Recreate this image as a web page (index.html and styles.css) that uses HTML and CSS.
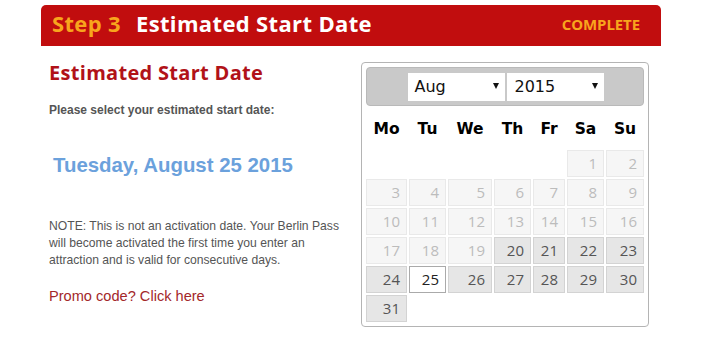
FILE: index.html
```html
<!DOCTYPE html>
<html>
<head>
<meta charset="utf-8">
<link rel="stylesheet" href="styles.css">
</head>
<body>
<div class="page">
  <div class="step-bar">
    <div class="step-title"><span class="step-num">Step 3</span><span class="step-name">Estimated Start Date</span></div>
    <div class="step-status">COMPLETE</div>
  </div>
  <div class="content">
    <div class="info">
      <h2 class="info-title">Estimated Start Date</h2>
      <p class="prompt">Please select your estimated start date:</p>
      <p class="chosen">Tuesday, August 25 2015</p>
      <p class="note">NOTE: This is not an activation date. Your Berlin Pass will become activated the first time you enter an attraction and is valid for consecutive days.</p>
      <a class="promo" href="#">Promo code? Click here</a>
    </div>
    <div class="calendar">
      <div class="cal-head">
        <div class="sel sel-month"><span>Aug</span><span class="arrow"></span></div>
        <div class="sel sel-year"><span>2015</span><span class="arrow"></span></div>
      </div>
      <div class="grid">
        <div class="dow">Mo</div><div class="dow">Tu</div><div class="dow">We</div><div class="dow">Th</div><div class="dow">Fr</div><div class="dow">Sa</div><div class="dow">Su</div>
        <div class="empty"></div><div class="empty"></div><div class="empty"></div><div class="empty"></div><div class="empty"></div>
        <div class="day off">1</div><div class="day off">2</div>
        <div class="day off">3</div><div class="day off">4</div><div class="day off">5</div><div class="day off">6</div><div class="day off">7</div><div class="day off">8</div><div class="day off">9</div>
        <div class="day off">10</div><div class="day off">11</div><div class="day off">12</div><div class="day off">13</div><div class="day off">14</div><div class="day off">15</div><div class="day off">16</div>
        <div class="day off">17</div><div class="day off">18</div><div class="day off">19</div><div class="day">20</div><div class="day">21</div><div class="day">22</div><div class="day">23</div>
        <div class="day">24</div><div class="day selected">25</div><div class="day">26</div><div class="day">27</div><div class="day">28</div><div class="day">29</div><div class="day">30</div>
        <div class="day">31</div>
      </div>
    </div>
  </div>
</div>
</body>
</html>
```
FILE: styles.css
```css
html, body {
  margin: 0;
  padding: 0;
  background: #ffffff;
}
.page {
  margin-left: 41px;
  width: 620px;
  padding-top: 5px;
}
.step-bar {
  height: 41px;
  background: #c10d0e;
  border-radius: 5px 5px 0 0;
  display: flex;
  align-items: center;
  justify-content: space-between;
  padding: 0 21px 0 11px;
  box-sizing: border-box;
  font-family: "Open Sans", sans-serif;
  font-weight: 700;
}
.step-title {
  font-size: 22px;
  line-height: 24px;
  letter-spacing: 0.35px;
  padding-bottom: 6px;
}
.step-num {
  color: #f8a51d;
  margin-right: 15px;
}
.step-name {
  color: #ffffff;
}
.step-status {
  color: #f8a51d;
  font-size: 15px;
  line-height: 18px;
  letter-spacing: -0.1px;
  padding-bottom: 3px;
}
.content {
  display: flex;
  margin-top: 16px;
}
.info {
  width: 320px;
  padding-left: 8px;
  box-sizing: border-box;
  font-family: "Liberation Sans", Arial, sans-serif;
}
.info-title {
  margin: 0;
  font-family: "Open Sans", sans-serif;
  font-weight: 700;
  font-size: 20px;
  line-height: 22px;
  color: #b11218;
  letter-spacing: 0.3px;
}
.prompt {
  margin: 19px 0 0;
  font-size: 12px;
  line-height: 14px;
  font-weight: 700;
  color: #555555;
}
.chosen {
  margin: 36px 0 0 4px;
  font-size: 20.4px;
  line-height: 24px;
  font-weight: 700;
  color: #6ba1dc;
}
.note {
  margin: 41px 0 0;
  max-width: 296px;
  font-size: 12.15px;
  line-height: 17px;
  color: #555555;
}
.promo {
  display: block;
  margin-top: 18px;
  font-size: 14.6px;
  line-height: 18px;
  color: #a3272a;
  text-decoration: none;
}
.calendar {
  width: 288px;
  box-sizing: border-box;
  border: 1px solid #b4b4b4;
  border-radius: 4px;
  padding: 4px;
}
.cal-head {
  height: 39px;
  box-sizing: border-box;
  background: #c9c9c9;
  border: 1px solid #b9b9b9;
  border-radius: 4px;
  display: flex;
  justify-content: center;
  align-items: center;
  gap: 2px;
  padding-left: 1px;
}
.sel {
  height: 28px;
  width: 97px;
  background: #ffffff;
  display: flex;
  align-items: center;
  justify-content: space-between;
  box-sizing: border-box;
  padding: 0 6px 0 7px;
  font-family: "DejaVu Sans", Verdana, sans-serif;
  font-size: 16px;
  color: #111111;
}
.sel-year {
  padding-left: 8px;
}
.arrow {
  width: 0;
  height: 0;
  border-left: 3.5px solid transparent;
  border-right: 3.5px solid transparent;
  border-top: 6px solid #111111;
  margin-top: -2px;
}
.grid {
  display: grid;
  grid-template-columns: 41px 37px 44px 37px 32px 37px 38px;
  grid-template-rows: 42px repeat(6, 27px);
  column-gap: 2px;
  row-gap: 2px;
}
.dow {
  display: flex;
  align-items: center;
  justify-content: center;
  font-family: "DejaVu Sans", Verdana, sans-serif;
  font-weight: 700;
  font-size: 15.5px;
  color: #000000;
  padding-top: 3px;
}
.day {
  box-sizing: border-box;
  border: 1px solid #d3d3d3;
  background: #e6e6e6;
  color: #555555;
  font-family: "Open Sans", sans-serif;
  font-size: 15px;
  line-height: 25px;
  text-align: right;
  padding-right: 6px;
}
.day.off {
  background: #f6f6f6;
  border-color: #e9e9e9;
  color: #bcbcbc;
}
.day.selected {
  background: #ffffff;
  border-color: #aaaaaa;
  color: #222222;
}
```
